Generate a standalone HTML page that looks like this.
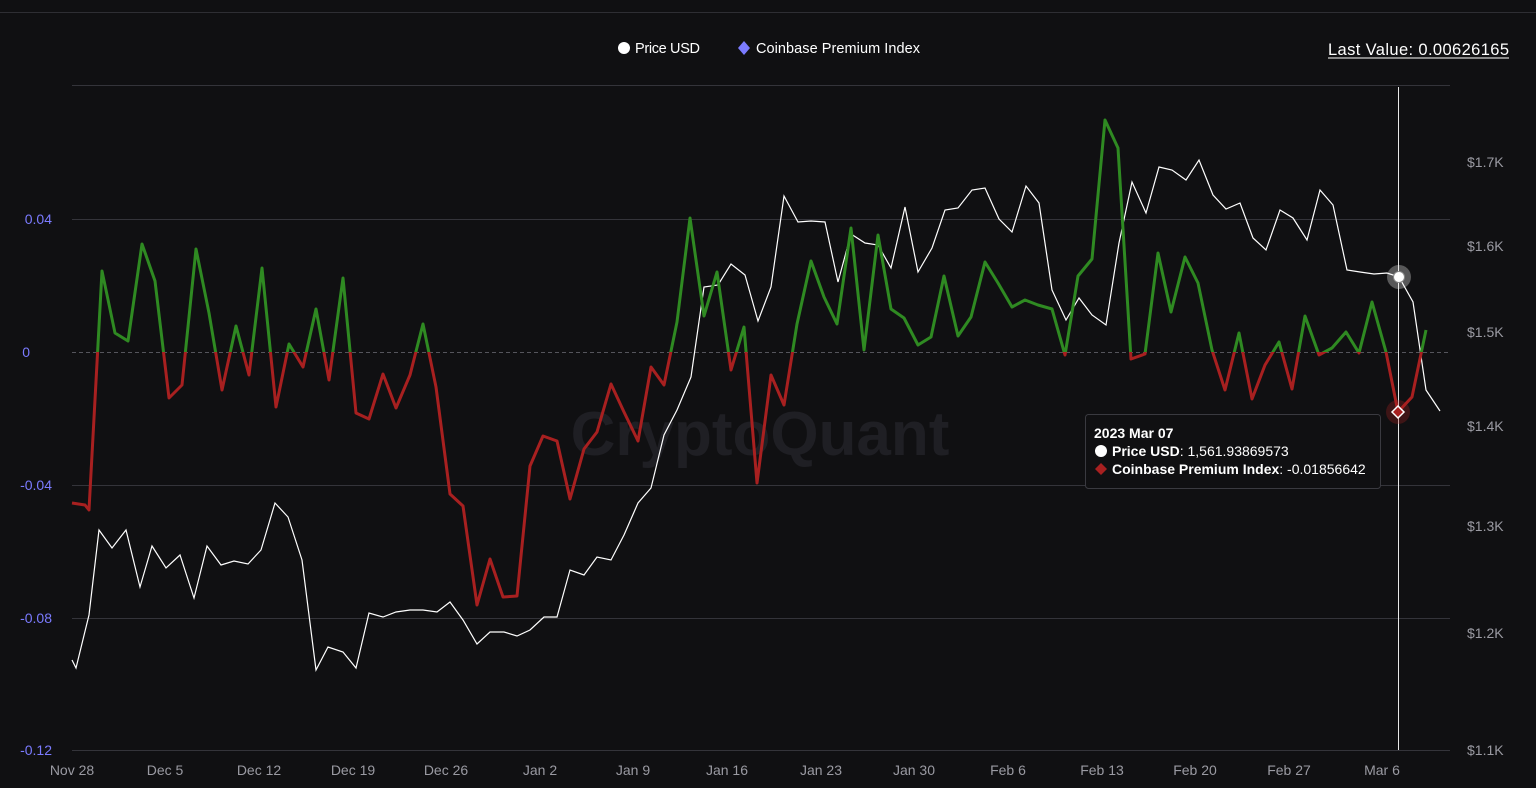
<!DOCTYPE html>
<html><head><meta charset="utf-8"><style>
html,body{margin:0;padding:0;background:#101012;width:1536px;height:788px;overflow:hidden;font-family:"Liberation Sans",sans-serif;}
</style></head><body>
<svg width="1536" height="788" xmlns="http://www.w3.org/2000/svg" style="position:absolute;left:0;top:0">
<defs>
<clipPath id="up"><rect x="0" y="0" width="1536" height="352"/></clipPath>
<clipPath id="dn"><rect x="0" y="352" width="1536" height="436"/></clipPath>
</defs>
<line x1="0" y1="12.5" x2="1536" y2="12.5" stroke="#2e2e33" stroke-width="1"/>
<g stroke="#34343a" stroke-width="1">
<line x1="72" y1="85.5" x2="1450" y2="85.5"/>
<line x1="72" y1="219.5" x2="1450" y2="219.5"/>
<line x1="72" y1="485.5" x2="1450" y2="485.5"/>
<line x1="72" y1="618.5" x2="1450" y2="618.5"/>
<line x1="72" y1="750.5" x2="1450" y2="750.5"/>
</g>
<line x1="72" y1="352.5" x2="1450" y2="352.5" stroke="#55555c" stroke-dasharray="4,3"/>
<text x="760" y="455" text-anchor="middle" font-size="62" fill="#1f1f24" font-family="Liberation Sans" font-weight="bold">CryptoQuant</text>
<g font-size="14" fill="#7b7bff" text-anchor="end">
<text x="52" y="224">0.04</text><text x="30" y="357">0</text><text x="52" y="490">-0.04</text><text x="52" y="623">-0.08</text><text x="52" y="755">-0.12</text>
</g>
<g font-size="14" fill="#9a9aa2">
<text x="1467" y="167">$1.7K</text><text x="1467" y="251">$1.6K</text><text x="1467" y="337">$1.5K</text><text x="1467" y="431">$1.4K</text><text x="1467" y="531">$1.3K</text><text x="1467" y="638">$1.2K</text><text x="1467" y="755">$1.1K</text>
</g>
<g font-size="14" fill="#9a9aa2" text-anchor="middle">
<text x="72" y="775">Nov 28</text><text x="165" y="775">Dec 5</text><text x="259" y="775">Dec 12</text><text x="353" y="775">Dec 19</text><text x="446" y="775">Dec 26</text><text x="540" y="775">Jan 2</text><text x="633" y="775">Jan 9</text><text x="727" y="775">Jan 16</text><text x="821" y="775">Jan 23</text><text x="914" y="775">Jan 30</text><text x="1008" y="775">Feb 6</text><text x="1102" y="775">Feb 13</text><text x="1195" y="775">Feb 20</text><text x="1289" y="775">Feb 27</text><text x="1382" y="775">Mar 6</text>
</g>
<polyline fill="none" stroke="#ffffff" stroke-width="1.2" points="72,660 76,668 89,615 99,530 112,548 126,530 140,587 152,546 166,568 180,555 194,598 207,546 221,565 234,561 248,564 261,550 275,503 288,517 302,560 316,670 328,647 343,652 356,668 369,613 383,617 396,612 410,610 423,610 437,612 450,602 463,620 477,644 490,632 504,632 517,636 530,630 544,617 557,617 570,570 584,575 597,557 611,560 624,535 638,503 651,488 664,435 677,410 691,377 704,287 718,285 731,264 745,275 758,321 771,287 784,196 798,222 811,221 825,222 838,282 851,234 865,243 878,245 891,268 905,207 918,272 932,248 945,210 958,208 972,190 985,188 999,219 1012,232 1026,186 1039,203 1052,290 1066,320 1079,298 1092,315 1106,325 1119,243 1132,182 1146,213 1159,167 1172,170 1186,180 1199,160 1213,195 1226,209 1240,203 1253,238 1266,250 1280,210 1293,218 1307,240 1320,190 1333,205 1347,270 1360,272 1374,274 1387,273 1399,277 1413,302 1426,390 1440,411"/>
<polyline clip-path="url(#up)" fill="none" stroke="#2f8a22" stroke-width="3" stroke-linejoin="round" points="72,503 85,505 89,510 102,271 115,333 128,341 142,244 155,281 169,398 182,385 196,249 209,313 222,390 236,326 249,375 262,268 276,407 289,344 303,367 316,309 329,380 343,278 356,413 369,419 383,374 396,408 410,375 423,324 436,387 450,494 463,506 477,605 490,559 503,597 517,596 530,466 543,436 557,441 570,499 584,449 597,432 611,384 624,412 638,441 651,367 664,385 677,322 690,218 704,316 717,272 731,370 744,327 757,483 771,375 784,405 797,324 811,261 824,297 837,324 851,228 864,350 878,235 891,309 904,318 918,345 931,337 944,276 958,336 971,317 985,262 998,283 1012,307 1025,300 1038,305 1052,309 1065,355 1078,276 1092,259 1105,120 1118,148 1131,359 1145,354 1158,253 1171,312 1185,257 1198,283 1212,350 1225,390 1239,333 1252,399 1265,365 1279,342 1292,389 1305,316 1319,355 1332,348 1346,332 1359,353 1372,302 1386,352 1398,412 1412,397 1426,330"/>
<polyline clip-path="url(#dn)" fill="none" stroke="#a82020" stroke-width="3" stroke-linejoin="round" points="72,503 85,505 89,510 102,271 115,333 128,341 142,244 155,281 169,398 182,385 196,249 209,313 222,390 236,326 249,375 262,268 276,407 289,344 303,367 316,309 329,380 343,278 356,413 369,419 383,374 396,408 410,375 423,324 436,387 450,494 463,506 477,605 490,559 503,597 517,596 530,466 543,436 557,441 570,499 584,449 597,432 611,384 624,412 638,441 651,367 664,385 677,322 690,218 704,316 717,272 731,370 744,327 757,483 771,375 784,405 797,324 811,261 824,297 837,324 851,228 864,350 878,235 891,309 904,318 918,345 931,337 944,276 958,336 971,317 985,262 998,283 1012,307 1025,300 1038,305 1052,309 1065,355 1078,276 1092,259 1105,120 1118,148 1131,359 1145,354 1158,253 1171,312 1185,257 1198,283 1212,350 1225,390 1239,333 1252,399 1265,365 1279,342 1292,389 1305,316 1319,355 1332,348 1346,332 1359,353 1372,302 1386,352 1398,412 1412,397 1426,330"/>
<line x1="1398.5" y1="87" x2="1398.5" y2="750" stroke="#e8e8e8" stroke-width="1"/>
<circle cx="1399" cy="277" r="12" fill="#ffffff" fill-opacity="0.3"/>
<circle cx="1399" cy="277" r="5.5" fill="#ffffff" stroke="#888" stroke-width="1"/>
<circle cx="1398" cy="412" r="12" fill="#a82020" fill-opacity="0.3"/>
<path d="M1398 406 L1404 412 L1398 418 L1392 412 Z" fill="#a82020" stroke="#fff" stroke-width="1.5"/>
<rect x="1085.5" y="414.5" width="295" height="74" rx="3" fill="#101012" stroke="#3a3a40"/>
<text x="1094" y="438" font-size="14" font-weight="bold" fill="#fff">2023 Mar 07</text>
<circle cx="1101" cy="451" r="6" fill="#fff"/>
<text x="1112" y="456" font-size="14" fill="#fff"><tspan font-weight="bold">Price USD</tspan>: 1,561.93869573</text>
<path d="M1101 463 L1107 469 L1101 475 L1095 469 Z" fill="#a82020"/>
<text x="1112" y="474" font-size="14" fill="#fff"><tspan font-weight="bold">Coinbase Premium Index</tspan>: -0.01856642</text>
<circle cx="624" cy="48" r="6" fill="#fff"/>
<text x="635" y="53" font-size="14.5" fill="#fff" textLength="65">Price USD</text>
<path d="M744 41 L750 48 L744 55 L738 48 Z" fill="#7b7bff"/>
<text x="756" y="53" font-size="14.5" fill="#fff" textLength="164">Coinbase Premium Index</text>
<text x="1328" y="55" font-size="16.5" fill="#fff" textLength="181">Last Value: 0.00626165</text>
<line x1="1328" y1="58" x2="1509" y2="58" stroke="#fff" stroke-width="1"/>
</svg>
</body></html>
